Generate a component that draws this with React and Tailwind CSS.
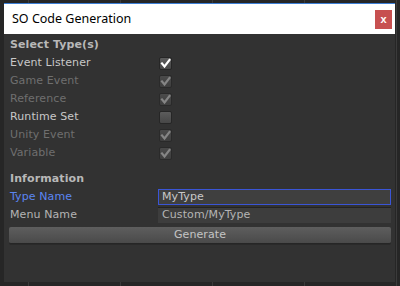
const font = "font-['DejaVu_Sans','Liberation_Sans',sans-serif]";

const types = [
  { name: 'Event Listener', checked: true, enabled: true },
  { name: 'Game Event', checked: true, enabled: false },
  { name: 'Reference', checked: true, enabled: false },
  { name: 'Runtime Set', checked: false, enabled: true },
  { name: 'Unity Event', checked: true, enabled: false },
  { name: 'Variable', checked: true, enabled: false },
];

function Checkbox({ checked, enabled }) {
  return (
    <div
      className={`w-[13px] h-[13px] rounded-[2px] border border-[#262626] bg-gradient-to-b from-[#5c5c5c] to-[#474747] flex items-center justify-center ${
        enabled ? '' : 'opacity-60'
      }`}
    >
      {checked && (
        <svg width="11" height="11" viewBox="0 0 11 11">
          <path
            d="M2 5.5 L4.5 8.5 L9.5 2"
            fill="none"
            stroke={enabled ? '#ffffff' : '#bdbdbd'}
            strokeWidth="2.2"
            strokeLinecap="square"
          />
        </svg>
      )}
    </div>
  );
}

export default function App() {
  return (
    <div className="w-[400px] h-[286px] bg-[#262626] bg-[linear-gradient(90deg,#3b3b3b_1px,transparent_1px)] bg-[length:92px_100%] bg-[position:28px_0] pt-[3px] pl-[4px] pr-[5px] pb-[4px] overflow-hidden">
      <div className="h-full flex flex-col border-t border-[#3d7fd6]">
        {/* Title bar */}
        <div className="h-[30px] bg-white flex items-center justify-between pl-[8px] pr-[3px]">
          <span className="text-[12.5px] text-black font-['Noto_Sans','Open_Sans',sans-serif]">SO Code Generation</span>
          <div className="w-[17px] h-[19px] bg-[#c75050] flex items-center justify-center text-white text-[11px] font-bold leading-none font-['Liberation_Sans',sans-serif]">
            x
          </div>
        </div>

        {/* Content */}
        <div className={`flex-1 bg-[#323232] pl-[6px] pr-[4px] pt-[2px] text-[11px] tracking-[0.1px] ${font}`}>
          <div className="h-[18px] flex items-center font-bold text-[#b8b8b8]">Select Type(s)</div>
          {types.map((t) => (
            <div key={t.name} className="h-[18px] flex items-center">
              <span className={`w-[149px] ${t.enabled ? 'text-[#c8c8c8]' : 'text-[#6f6f6f]'}`}>{t.name}</span>
              <Checkbox checked={t.checked} enabled={t.enabled} />
            </div>
          ))}

          <div className="h-[18px] mt-[8px] flex items-center font-bold text-[#b8b8b8]">Information</div>
          <div className="h-[18px] flex items-center">
            <span className="w-[148px] text-[#5b86f2]">Type Name</span>
            <div className="flex-1 h-[16px] bg-[#3f3f3f] border border-[#3a55d6] flex items-center pl-[3px] text-[#c8c8c8]">
              MyType
            </div>
          </div>
          <div className="h-[18px] flex items-center">
            <span className="w-[148px] text-[#b4b4b4]">Menu Name</span>
            <div className="flex-1 h-[16px] bg-[#3d3d3d] border-t border-[#232323] flex items-center pl-[4px] text-[#b4b4b4]">
              Custom/MyType
            </div>
          </div>
          <div className="mt-[3px] -ml-[1px] h-[17px] rounded-[2px] bg-gradient-to-b from-[#5e5e5e] to-[#4a4a4a] border-b border-[#262626] shadow-[0_1px_0_#2a2a2a] flex items-center justify-center text-[#c4c4c4]">
            Generate
          </div>
        </div>
      </div>
    </div>
  );
}
